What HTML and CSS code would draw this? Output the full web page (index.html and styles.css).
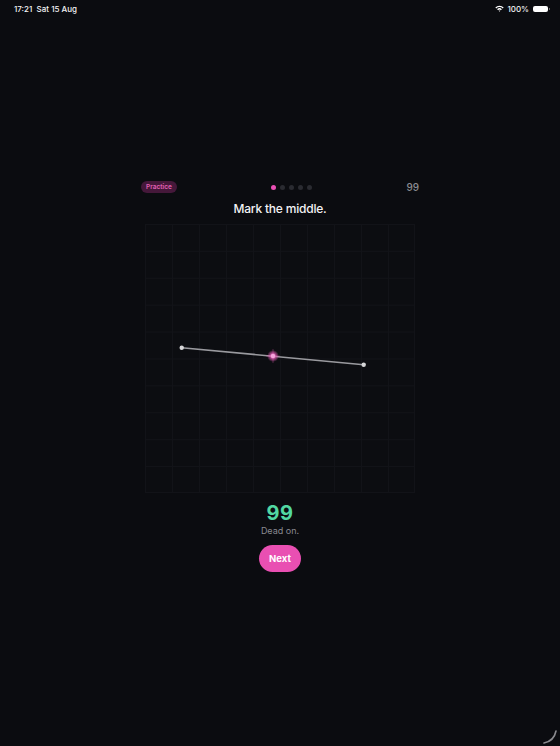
FILE: index.html
```html
<!DOCTYPE html>
<html>
<head>
<meta charset="utf-8">
<link rel="stylesheet" href="styles.css">
</head>
<body>
<div class="status">
  <div class="status-left">17:21&nbsp;&nbsp;Sat 15 Aug</div>
  <div class="status-right">
    <svg class="wifi" width="9" height="7" viewBox="0 0 9 7">
      <path d="M0.3 2.4 A6 6 0 0 1 8.7 2.4 L7.7 3.4 A4.6 4.6 0 0 0 1.3 3.4 Z" fill="#fff"/>
      <path d="M2.1 4.2 A3.5 3.5 0 0 1 6.9 4.2 L5.9 5.2 A2.1 2.1 0 0 0 3.1 5.2 Z" fill="#fff"/>
      <path d="M3.7 5.8 A1.1 1.1 0 0 1 5.3 5.8 L4.5 6.7 Z" fill="#fff"/>
    </svg>
    <span>100%</span>
    <span class="battery"><span class="battery-fill"></span></span>
  </div>
</div>

<main class="game">
  <div class="top-row">
    <span class="pill">Practice</span>
    <div class="dots">
      <span class="dot active"></span>
      <span class="dot"></span>
      <span class="dot"></span>
      <span class="dot"></span>
      <span class="dot"></span>
    </div>
    <span class="best">99</span>
  </div>
  <h1 class="title">Mark the middle.</h1>
  <div class="board">
    <svg class="board-svg" width="270" height="269" viewBox="0 0 270 269">
      <defs>
        <radialGradient id="glow">
          <stop offset="0" stop-color="#f7a6de" stop-opacity="1"/>
          <stop offset="0.45" stop-color="#e85db8" stop-opacity="0.75"/>
          <stop offset="1" stop-color="#e85db8" stop-opacity="0"/>
        </radialGradient>
      </defs>
      <line x1="36.7" y1="123.7" x2="218.7" y2="140.7" stroke="#9a9a9f" stroke-width="1.6" stroke-linecap="round"/>
      <circle cx="36.7" cy="123.7" r="2.2" fill="#d6d6d8"/>
      <circle cx="218.7" cy="140.7" r="2.2" fill="#d6d6d8"/>
      <line x1="128" y1="125" x2="128" y2="139" stroke="#e85db8" stroke-opacity="0.3" stroke-width="1"/>
      <line x1="121" y1="132" x2="135" y2="132" stroke="#e85db8" stroke-opacity="0.3" stroke-width="1"/>
      <circle cx="128" cy="132" r="6" fill="url(#glow)"/>
      <circle cx="128" cy="132" r="2.2" fill="#f5a3dc"/>
    </svg>
  </div>
  <div class="score">99</div>
  <div class="verdict">Dead on.</div>
  <button class="next">Next</button>
</main>

<svg class="corner" width="16" height="16" viewBox="0 0 16 16">
  <path d="M2 15 Q12 13 14 3" fill="none" stroke="#8a8a8f" stroke-width="1.6" stroke-linecap="round"/>
</svg>
</body>
</html>
```

FILE: styles.css
```css
html, body {
  margin: 0;
  padding: 0;
  background: #0b0c10;
  height: 100%;
}
body {
  font-family: Inter, "Liberation Sans", sans-serif;
  color: #f2f2f4;
  position: relative;
  overflow: hidden;
}
.status {
  height: 17px;
  display: flex;
  justify-content: space-between;
  align-items: center;
  padding: 0 12px 0 14px;
  font-size: 8px;
  font-weight: 500;
  color: #f4f4f6;
}
.status-right {
  display: flex;
  align-items: center;
  gap: 2px;
}
.wifi { margin-right: 1px; }
.battery {
  position: relative;
  width: 15px;
  height: 6px;
  border-radius: 2px;
  background: #fff;
  margin-left: 2px;
}
.battery::after {
  content: "";
  position: absolute;
  right: -2px;
  top: 2px;
  width: 1px;
  height: 2px;
  background: #888;
  border-radius: 0 1px 1px 0;
}
.game {
  width: 278px;
  margin: 164px auto 0;
  display: flex;
  flex-direction: column;
  align-items: center;
}
.top-row {
  width: 100%;
  height: 12px;
  display: flex;
  align-items: center;
  justify-content: space-between;
}
.pill {
  font-size: 6.5px;
  font-weight: 600;
  color: #e060b4;
  background: #45183a;
  border-radius: 6px;
  padding: 2px 5px;
  line-height: 8px;
}
.dots {
  display: flex;
  gap: 4px;
  margin-left: 0;
}
.dot {
  width: 5px;
  height: 5px;
  border-radius: 50%;
  background: #2a2b31;
}
.dot.active { background: #ea4fb4; }
.best {
  font-size: 10px;
  font-weight: 500;
  color: #8c8c92;
}
.title {
  margin: 9px 0 0;
  font-size: 12px;
  font-weight: 500;
  letter-spacing: -0.2px;
  line-height: 14px;
  color: #f3f3f5;
}
.board {
  margin-top: 8px;
  width: 270px;
  height: 269px;
  position: relative;
  background-color: #0c0d11;
  background-image:
    linear-gradient(to right, #121318 1px, transparent 1px),
    linear-gradient(to bottom, #121318 1px, transparent 1px);
  background-size: 27px 26.9px;
  box-shadow: inset -1px -1px 0 #121318;
}
.board-svg { display: block; }
.score {
  margin-top: 8px;
  font-size: 20px;
  font-weight: 700;
  line-height: 24px;
  color: #52d8a2;
  letter-spacing: 0.5px;
}
.verdict {
  font-size: 9px;
  line-height: 12px;
  color: #8a8a90;
}
.next {
  margin-top: 8px;
  width: 42px;
  height: 27px;
  border: none;
  border-radius: 14px;
  background: #e94fb2;
  color: #fff;
  font-family: Inter, "Liberation Sans", sans-serif;
  font-size: 9.5px;
  font-weight: 700;
  padding: 0;
}
.corner {
  position: absolute;
  right: 2px;
  bottom: 2px;
}
```
